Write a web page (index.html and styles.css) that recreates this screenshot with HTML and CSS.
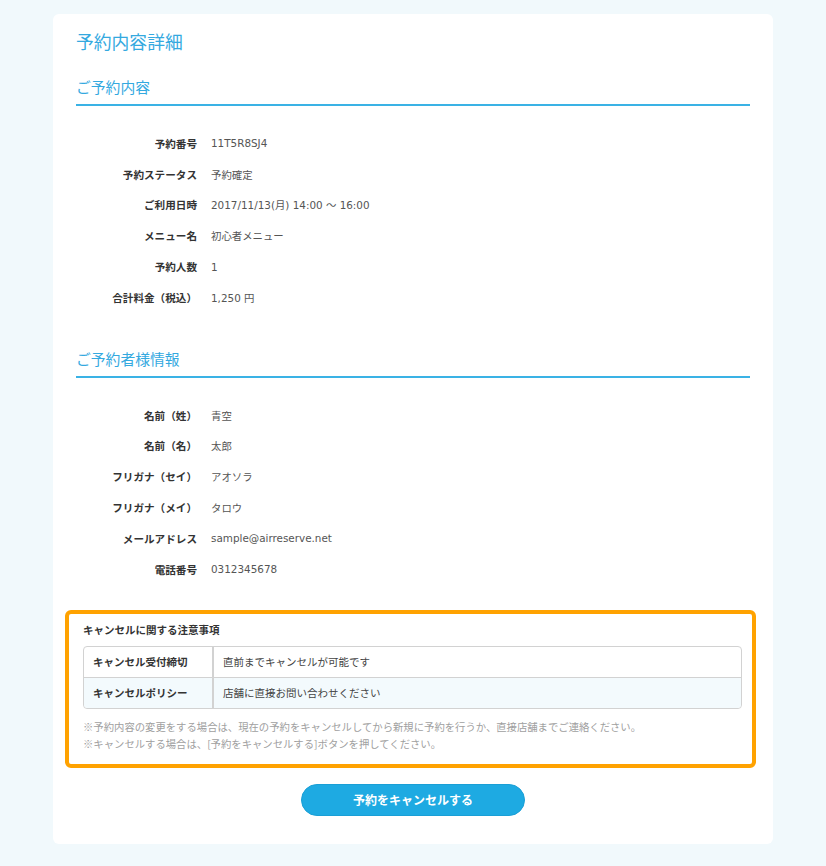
FILE: index.html
```html
<!DOCTYPE html>
<html lang="ja">
<head>
<meta charset="utf-8">
<title>予約内容詳細</title>
<link rel="stylesheet" href="styles.css">
</head>
<body>
<main class="card">
  <h1 class="page-title">予約内容詳細</h1>

  <section class="section">
    <h2 class="section-title">ご予約内容</h2>
    <dl class="info">
      <div class="row"><dt>予約番号</dt><dd>11T5R8SJ4</dd></div>
      <div class="row"><dt>予約ステータス</dt><dd>予約確定</dd></div>
      <div class="row"><dt>ご利用日時</dt><dd>2017/11/13(月) 14:00 ～ 16:00</dd></div>
      <div class="row"><dt>メニュー名</dt><dd>初心者メニュー</dd></div>
      <div class="row"><dt>予約人数</dt><dd>1</dd></div>
      <div class="row"><dt>合計料金（税込）</dt><dd>1,250 円</dd></div>
    </dl>
  </section>

  <section class="section section-second">
    <h2 class="section-title">ご予約者様情報</h2>
    <dl class="info">
      <div class="row"><dt>名前（姓）</dt><dd>青空</dd></div>
      <div class="row"><dt>名前（名）</dt><dd>太郎</dd></div>
      <div class="row"><dt>フリガナ（セイ）</dt><dd>アオソラ</dd></div>
      <div class="row"><dt>フリガナ（メイ）</dt><dd>タロウ</dd></div>
      <div class="row"><dt>メールアドレス</dt><dd>sample@airreserve.net</dd></div>
      <div class="row"><dt>電話番号</dt><dd>0312345678</dd></div>
    </dl>
  </section>

  <section class="notice">
    <h3 class="notice-title">キャンセルに関する注意事項</h3>
    <table class="notice-table">
      <tr><th>キャンセル受付締切</th><td>直前までキャンセルが可能です</td></tr>
      <tr class="alt"><th>キャンセルポリシー</th><td>店舗に直接お問い合わせください</td></tr>
    </table>
    <p class="note">※予約内容の変更をする場合は、現在の予約をキャンセルしてから新規に予約を行うか、直接店舗までご連絡ください。</p>
    <p class="note">※キャンセルする場合は、[予約をキャンセルする]ボタンを押してください。</p>
  </section>

  <div class="actions">
    <button class="cancel-btn" type="button">予約をキャンセルする</button>
  </div>
</main>
</body>
</html>
```

FILE: styles.css
```css
html, body {
  margin: 0;
  padding: 0;
}
body {
  background: #f1f9fc;
  font-family: "Noto Sans CJK JP", "Noto Sans", sans-serif;
  color: #333;
  padding: 14px 0 0 53px;
  min-height: 866px;
  box-sizing: border-box;
}
.card {
  width: 720px;
  height: 830px;
  box-sizing: border-box;
  background: #fff;
  border-radius: 6px;
  padding: 16px 23px 0;
}
.page-title {
  margin: 0;
  font-size: 17.8px;
  font-weight: normal;
  line-height: 22px;
  color: #34a9df;
}
.section-title {
  margin: 0;
  font-size: 14.8px;
  font-weight: normal;
  line-height: 22px;
  color: #34a9df;
  padding-bottom: 6px;
  border-bottom: 2px solid #3ab2e5;
}
.section {
  margin-top: 24px;
}
.section-second {
  margin-top: 35px;
}
.info {
  margin: 0;
  padding-top: 22px;
}
.row {
  display: flex;
  align-items: center;
  height: 30.8px;
  font-size: 10.6px;
}
.row dt {
  width: 121px;
  text-align: right;
  font-weight: bold;
  color: #333;
}
.row dd {
  margin: 0 0 0 14px;
  color: #555;
  font-family: "DejaVu Sans", "Noto Sans CJK JP", sans-serif;
  font-size: 10.4px;
}
.notice {
  margin: 25px 0 0 -11px;
  width: 691px;
  box-sizing: border-box;
  border: 4px solid #ffa200;
  border-radius: 6px;
  padding: 8px 10px 12px 14px;
}
.notice-title {
  margin: 0;
  font-size: 10.5px;
  font-weight: bold;
  line-height: 16px;
  color: #333;
}
.notice-table {
  margin-top: 8px;
  width: 100%;
  border-collapse: separate;
  border-spacing: 0;
  border: 1px solid #d2d2d2;
  border-radius: 4px;
  font-size: 10.5px;
}
.notice-table th,
.notice-table td {
  height: 30px;
  padding: 0 9px;
  text-align: left;
  color: #444;
}
.notice-table th {
  width: 110px;
  font-weight: bold;
  border-right: 2px solid #d2d2d2;
  color: #333;
}
.notice-table .alt th,
.notice-table .alt td {
  border-top: 1px solid #d2d2d2;
  background: #f3fafd;
}
.notice-table .alt th {
  border-bottom-left-radius: 4px;
}
.notice-table .alt td {
  border-bottom-right-radius: 4px;
}
.note {
  margin: 0;
  font-size: 10.35px;
  line-height: 17px;
  color: #a0a0a0;
}
.note:first-of-type {
  margin-top: 9px;
}
.actions {
  display: flex;
  justify-content: center;
  margin-top: 16px;
}
.cancel-btn {
  width: 224px;
  height: 32px;
  border-radius: 16px;
  border: 1px solid #1a9fd6;
  background: #1eaae2;
  color: #fff;
  font-family: "Noto Sans CJK JP", "Noto Sans", sans-serif;
  font-size: 12px;
  font-weight: bold;
  padding: 0;
}
```
